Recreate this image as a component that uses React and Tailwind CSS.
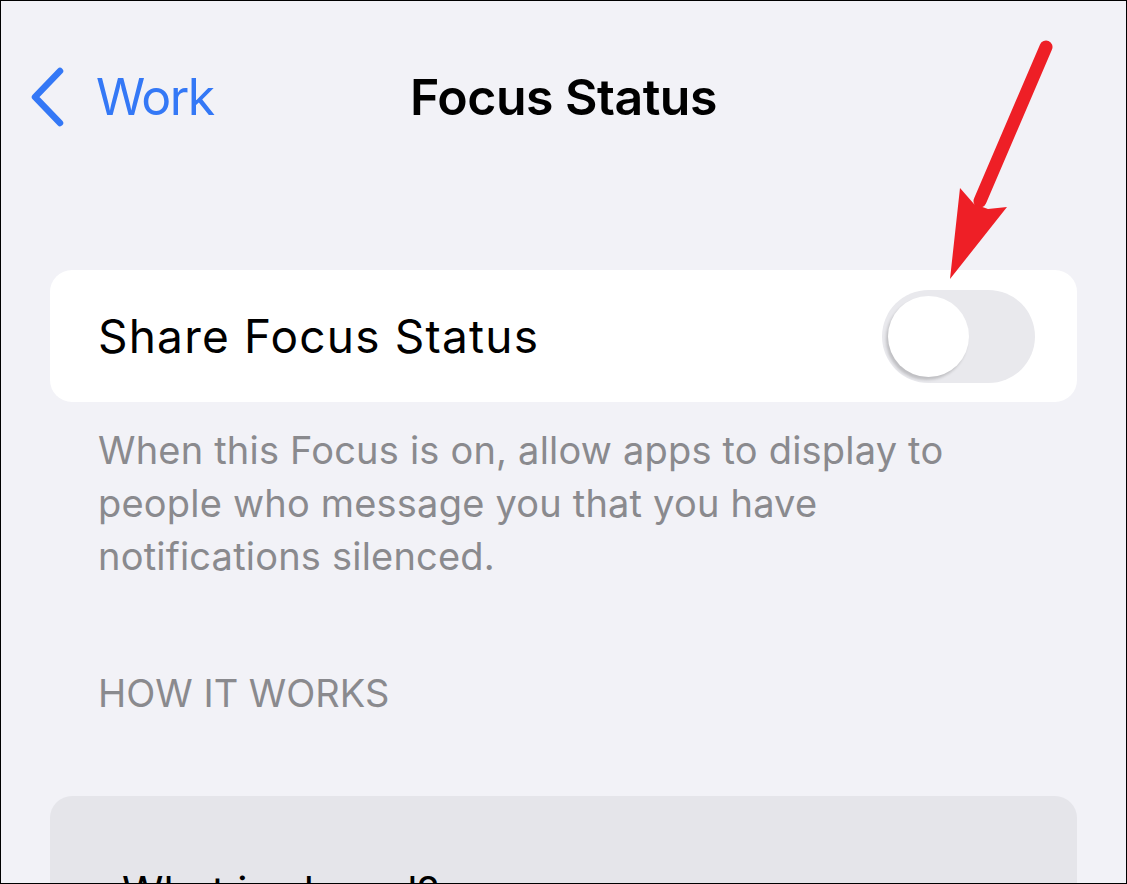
import React from 'react';

const FONT = { fontFamily: 'Inter, "Noto Sans", "Liberation Sans", sans-serif' };

function Arrow() {
  // red annotation arrow pointing at the toggle
  return (
    <svg className="absolute left-0 top-0 pointer-events-none" width="1127" height="884" viewBox="0 0 1127 884">
      <line x1="1045" y1="46" x2="979" y2="200" stroke="#ee1f26" strokeWidth="13" strokeLinecap="round" />
      <polygon points="949,278 959,187 973,203 987,208 1006,206" fill="#ee1f26" />
    </svg>
  );
}

function Toggle() {
  return (
    <div className="w-[153px] h-[93px] rounded-full bg-[#e9e9ed] p-[6px] flex items-center">
      <div className="w-[81px] h-[81px] rounded-full bg-white shadow-[-2px_3px_3px_rgba(0,0,0,0.18)]" />
    </div>
  );
}

export default function App() {
  return (
    <div className="relative w-[1127px] h-[884px] overflow-hidden bg-[#f2f2f7] border border-black" style={FONT}>
      {/* nav bar */}
      <div className="relative flex items-center h-[196px] pb-[4px]">
        <div className="flex items-center pl-[27px]">
          <svg width="38" height="62" viewBox="0 0 38 62">
            <polyline points="32,5 7,31 32,57" fill="none" stroke="#3478f6" strokeWidth="6.5" strokeLinecap="round" strokeLinejoin="round" />
          </svg>
          <span className="ml-[30px] text-[50px] text-[#3478f6] tracking-[-1.5px]">Work</span>
        </div>
        <h1 className="absolute left-0 right-0 text-center text-[50px] font-semibold text-black tracking-[-0.5px]">Focus Status</h1>
      </div>

      <div className="px-[49px]">
        <div className="flex items-center justify-between h-[132px] rounded-[22px] bg-white pl-[48px] pr-[42px] mt-[73px]">
          <span className="text-[46px] text-black tracking-[1.2px]">Share Focus Status</span>
          <Toggle />
        </div>

        <p className="mt-[22px] px-[48px] text-[38px] leading-[53px] text-[#8a8a8e] tracking-[0.2px]">
          When this Focus is on, allow apps to display to<br />
          people who message you that you have<br />
          notifications silenced.
        </p>

        <p className="mt-[84px] px-[48px] text-[38px] leading-[53px] text-[#8a8a8e]">HOW IT WORKS</p>

        <div className="mt-[76px] h-[200px] rounded-[22px] bg-[#e5e5ea] pl-[72px] pt-[64px]">
          <span className="text-[42px] text-black">What is shared?</span>
        </div>
      </div>

      <Arrow />
    </div>
  );
}
